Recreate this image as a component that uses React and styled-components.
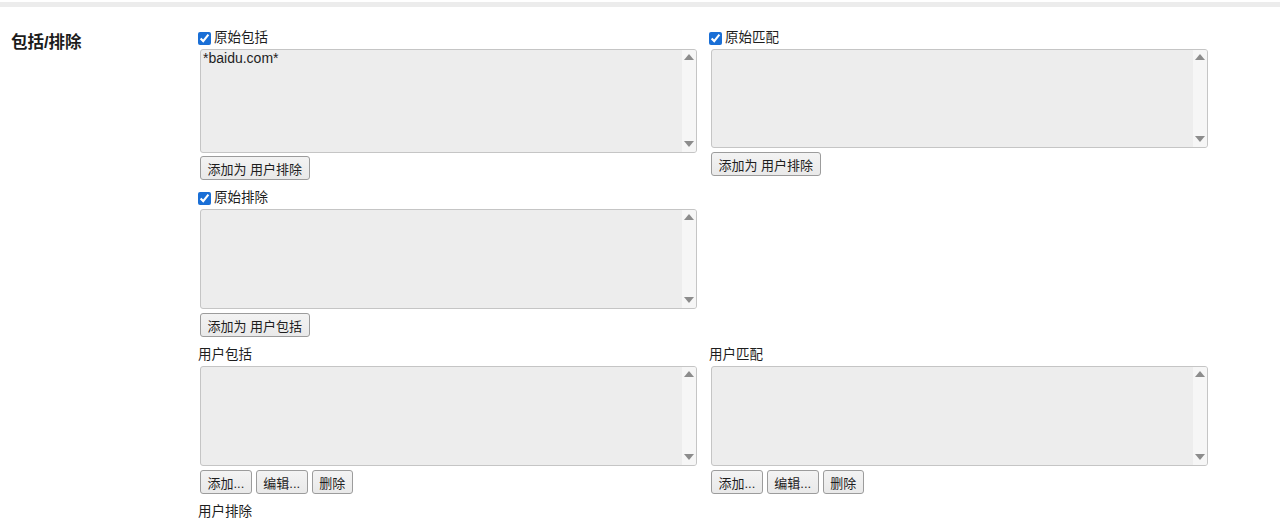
import React from 'react';
import styled, { createGlobalStyle } from 'styled-components';

const GlobalStyle = createGlobalStyle`
  html, body {
    margin: 0;
    padding: 0;
    background: #ffffff;
  }

  body {
    font-family: "Liberation Sans", "Noto Sans CJK SC", sans-serif;
    font-size: 13px;
    color: #1e1e1e;
  }
`;

const SPage = styled.div`
  width: 1280px;
  height: 522px;
  overflow: hidden;
`;

const STopRule = styled.div`
  height: 5px;
  margin-top: 2px;
  background-color: #ececec;
`;

const SSection = styled.section`
  display: flex;
  align-items: flex-start;
  padding-top: 21px;
`;

const STitle = styled.h2`
  width: 187px;
  margin: 0;
  padding: 3px 0 0 11px;
  font-size: 16.5px;
  line-height: 22px;
  font-weight: 700;
  color: #1c1c1c;
`;

const SGrid = styled.div`
  display: grid;
  grid-template-columns: 499px 499px;
  column-gap: 12px;
  align-items: start;
`;

const SBlock = styled.div`
  display: flex;
  flex-direction: column;
  padding-bottom: 8px;
`;

const SLabel = styled.label`
  display: flex;
  align-items: center;
  height: 20px;
  font-size: 13.5px;
  line-height: 20px;
  color: #1e1e1e;
`;

const SCheck = styled.input`
  width: 13px;
  height: 13px;
  margin: 0 3px 0 0;
  accent-color: #1a6fd6;
`;

const SBox = styled.div`
  display: flex;
  height: ${({ $h }) => $h}px;
  margin: 1px 0 0 2px;
  box-sizing: border-box;
  border: 1px solid #c5c5c5;
  border-radius: 3px;
  background-color: #ededed;
  overflow: hidden;
`;

const SText = styled.textarea`
  flex: 1;
  margin: 0;
  padding: 0 2px;
  border: none;
  outline: none;
  resize: none;
  overflow: hidden;
  background: transparent;
  font-family: "Liberation Sans", "Noto Sans CJK SC", sans-serif;
  font-size: 14px;
  line-height: 17px;
  color: #1e1e1e;
`;

const STrack = styled.div`
  display: flex;
  flex-direction: column;
  justify-content: space-between;
  align-items: center;
  width: 14px;
  padding: 4px 0 5px;
  box-sizing: border-box;
  background-color: #f6f6f6;
`;

const SArrow = styled.span`
  width: 0;
  height: 0;
  border-left: 5px solid transparent;
  border-right: 5px solid transparent;
  ${({ $down }) =>
    $down ? 'border-top: 6px solid #8c8c8c;' : 'border-bottom: 6px solid #8c8c8c;'}
`;

const SButtons = styled.div`
  display: flex;
  gap: 4px;
  margin: ${({ $gap }) => $gap}px 0 0 2px;
`;

const SButton = styled.button`
  height: 24px;
  padding: 0 6.5px;
  border: 1px solid #9c9c9c;
  border-radius: 3px;
  background: linear-gradient(#f3f3f3, #e9e9e9);
  font-family: "Liberation Sans", "Noto Sans CJK SC", sans-serif;
  font-size: 13px;
  color: #1e1e1e;
  white-space: nowrap;
`;

function ListBox({ height, value }) {
  return (
    <SBox $h={height}>
      <SText readOnly value={value || ''} />
      <STrack>
        <SArrow />
        <SArrow $down />
      </STrack>
    </SBox>
  );
}

function Block({ label, checkable, height, value, buttons, gap = 4 }) {
  return (
    <SBlock>
      <SLabel>
        {checkable && <SCheck type="checkbox" defaultChecked />}
        {label}
      </SLabel>
      {height && <ListBox height={height} value={value} />}
      {buttons && (
        <SButtons $gap={gap}>
          {buttons.map((b) => (
            <SButton key={b} type="button">
              {b}
            </SButton>
          ))}
        </SButtons>
      )}
    </SBlock>
  );
}

const USER_BTNS = ['添加...', '编辑...', '删除'];

function App() {
  return (
    <SPage>
      <GlobalStyle />
      <STopRule />
      <SSection>
        <STitle>包括/排除</STitle>
        <SGrid>
          <Block
            label="原始包括"
            checkable
            height={104}
            value="*baidu.com*"
            buttons={['添加为 用户排除']}
            gap={3}
          />
          <Block label="原始匹配" checkable height={99} buttons={['添加为 用户排除']} gap={4} />
          <Block label="原始排除" checkable height={100} buttons={['添加为 用户包括']} />
          <div />
          <Block label="用户包括" height={100} buttons={USER_BTNS} />
          <Block label="用户匹配" height={100} buttons={USER_BTNS} />
          <Block label="用户排除" height={100} />
        </SGrid>
      </SSection>
    </SPage>
  );
}

export default App;
